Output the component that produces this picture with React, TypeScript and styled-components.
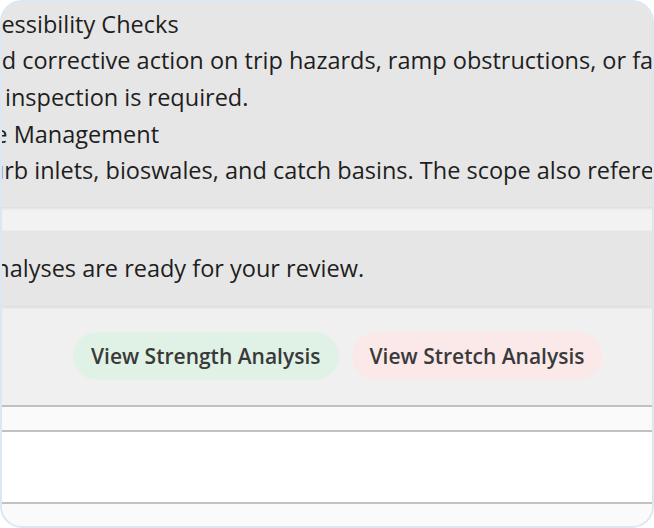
import React from 'react';
import styled, { createGlobalStyle } from 'styled-components';

const GlobalStyle = createGlobalStyle`
  html, body {
    margin: 0;
    padding: 0;
    background: #ffffff;
  }
  * {
    box-sizing: border-box;
  }
`;

const Frame = styled.div`
  width: 654px;
  height: 528px;
  border: 2px solid #dce7f1;
  border-radius: 22px;
  overflow: hidden;
  background: #f2f2f2;
  font-family: 'Open Sans', 'Noto Sans', sans-serif;
`;

const Content = styled.div`
  margin-left: -160px;
  width: 1050px;
  display: flex;
  flex-direction: column;
`;

const Card = styled.div<{ $top: number; $bottom: number; $left?: number; $spaced?: boolean }>`
  background: #e6e6e6;
  padding: ${({ $top, $bottom, $left = 20 }) => `${$top}px 20px ${$bottom}px ${$left}px`};
  margin-top: ${({ $spaced }) => ($spaced ? '24px' : '0')};
  box-shadow: 0 1px 3px rgba(0, 0, 0, 0.12);
  position: relative;
`;

const Line = styled.p`
  margin: 0;
  font-size: 23.5px;
  line-height: 36.7px;
  color: #1e1e1e;
  white-space: nowrap;
`;

const Paragraph = styled.p`
  margin: 0;
  font-size: 23.5px;
  line-height: 36.7px;
  color: #1e1e1e;
`;

const ButtonRow = styled.div`
  display: flex;
  gap: 13px;
  padding: 26px 0 25px 231px;
  background: #f0f0f0;
`;

const Pill = styled.button<{ $bg: string }>`
  height: 48px;
  padding: 0 18px;
  border: none;
  border-radius: 24px;
  background: ${({ $bg }) => $bg};
  color: #3a3a3a;
  font-family: 'Open Sans', 'Noto Sans', sans-serif;
  font-size: 21px;
  font-weight: 600;
  white-space: nowrap;
  cursor: pointer;
`;

const TableRow = styled.div<{ $bg: string; $height: number }>`
  height: ${({ $height }) => $height}px;
  border-top: 2px solid #c1c1c1;
  background: ${({ $bg }) => $bg};
`;

const items = [
  {
    title: 'Sidewalk Accessibility Checks',
    text: 'Log faults and corrective action on trip hazards, ramp obstructions, or failed curb cuts, and note it when inspection is required.',
  },
  {
    title: 'Site Drainage Management',
    text: 'Inspect all curb inlets, bioswales, and catch basins. The scope also references ADA rules.',
  },
];

export default function App() {
  return (
    <>
      <GlobalStyle />
      <Frame>
        <Content>
          <Card $top={3.5} $bottom={18}>
            {items.map((item) => (
              <React.Fragment key={item.title}>
                <Line>{item.title}</Line>
                <Paragraph>{item.text}</Paragraph>
              </React.Fragment>
            ))}
          </Card>
          <Card $top={19} $bottom={19} $left={26} $spaced>
            <Line>Both your analyses are ready for your review.</Line>
          </Card>
          <ButtonRow>
            <Pill $bg="#e0f2e6">View Strength Analysis</Pill>
            <Pill $bg="#fbe9e9">View Stretch Analysis</Pill>
          </ButtonRow>
          <TableRow $bg="#fafafa" $height={25} />
          <TableRow $bg="#ffffff" $height={72} />
          <TableRow $bg="#fafafa" $height={40} />
        </Content>
      </Frame>
    </>
  );
}
